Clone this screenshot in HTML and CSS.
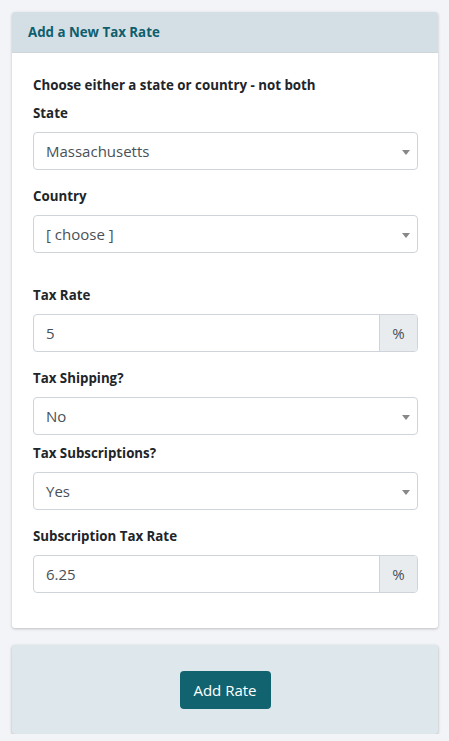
FILE: index.html
```html
<!DOCTYPE html>
<html>
<head>
<meta charset="utf-8">
<link rel="stylesheet" href="styles.css">
</head>
<body>
<div class="page">
  <div class="card">
    <div class="card-header">Add a New Tax Rate</div>
    <div class="card-body">
      <div class="note">Choose either a state or country - not both</div>
      <div class="group g-state">
        <label class="lbl">State</label>
        <div class="select"><span>Massachusetts</span><i class="caret"></i></div>
      </div>
      <div class="group g-country">
        <label class="lbl">Country</label>
        <div class="select"><span>[ choose ]</span><i class="caret"></i></div>
      </div>
      <div class="group g-rate">
        <label class="lbl">Tax Rate</label>
        <div class="input-group"><div class="input">5</div><div class="addon">%</div></div>
      </div>
      <div class="group g-ship">
        <label class="lbl">Tax Shipping?</label>
        <div class="select"><span>No</span><i class="caret"></i></div>
      </div>
      <div class="group g-subs">
        <label class="lbl">Tax Subscriptions?</label>
        <div class="select"><span>Yes</span><i class="caret"></i></div>
      </div>
      <div class="group g-subrate">
        <label class="lbl">Subscription Tax Rate</label>
        <div class="input-group"><div class="input">6.25</div><div class="addon">%</div></div>
      </div>
    </div>
  </div>
  <div class="card footer-card">
    <button class="btn">Add Rate</button>
  </div>
</div>
</body>
</html>
```
FILE: styles.css
```css
html, body {
  margin: 0;
  padding: 0;
  background: #f3f4f7;
  font-family: "Open Sans", "Noto Sans", sans-serif;
  color: #212529;
}
.page {
  padding: 12px 11px 0 12px;
}
.card {
  background: #fff;
  border-radius: 3px;
  box-shadow: 0 1px 3px rgba(0,0,0,0.22);
  overflow: hidden;
}
.card-header {
  background: #d3dfe4;
  height: 41px;
  line-height: 41px;
  padding-left: 16px;
  font-size: 13.3px;
  font-weight: 700;
  color: #0f5e6d;
  border-bottom: 1px solid #cfd6da;
  box-sizing: border-box;
}
.card-body {
  padding: 22px 20px 35px 21px;
}
.note, .lbl {
  display: block;
  font-size: 13.3px;
  font-weight: 700;
  line-height: 21px;
  color: #212529;
}
.note { margin-bottom: 7px; }
.lbl { margin-bottom: 8px; }
.g-state { margin-bottom: 16px; }
.g-country { margin-bottom: 32px; }
.g-rate { margin-bottom: 16px; }
.g-ship { margin-bottom: 8px; }
.g-subs { margin-bottom: 16px; }
.select, .input-group {
  height: 38px;
  box-sizing: border-box;
  border: 1px solid #ced4da;
  border-radius: 4px;
  display: flex;
  align-items: center;
  font-size: 15px;
  color: #495057;
  background: #fff;
}
.select {
  padding: 0 7px 0 12px;
  justify-content: space-between;
}
.caret {
  width: 0;
  height: 0;
  border-left: 4px solid transparent;
  border-right: 4px solid transparent;
  border-top: 5px solid #888;
  margin-top: 3px;
}
.input-group { overflow: hidden; }
.input {
  flex: 1;
  padding-left: 12px;
}
.addon {
  width: 37px;
  align-self: stretch;
  display: flex;
  align-items: center;
  justify-content: center;
  background: #e9ecef;
  border-left: 1px solid #ced4da;
}
.footer-card {
  margin-top: 17px;
  background: #dee7ec;
  height: 89px;
  display: flex;
  align-items: center;
  justify-content: center;
  box-shadow: 0 1px 3px rgba(0,0,0,0.3);
}
.btn {
  background: #11636f;
  color: #fff;
  border: none;
  border-radius: 4px;
  width: 91px;
  height: 38px;
  font-family: "Open Sans", "Noto Sans", sans-serif;
  font-size: 15px;
  padding: 0;
}
```
